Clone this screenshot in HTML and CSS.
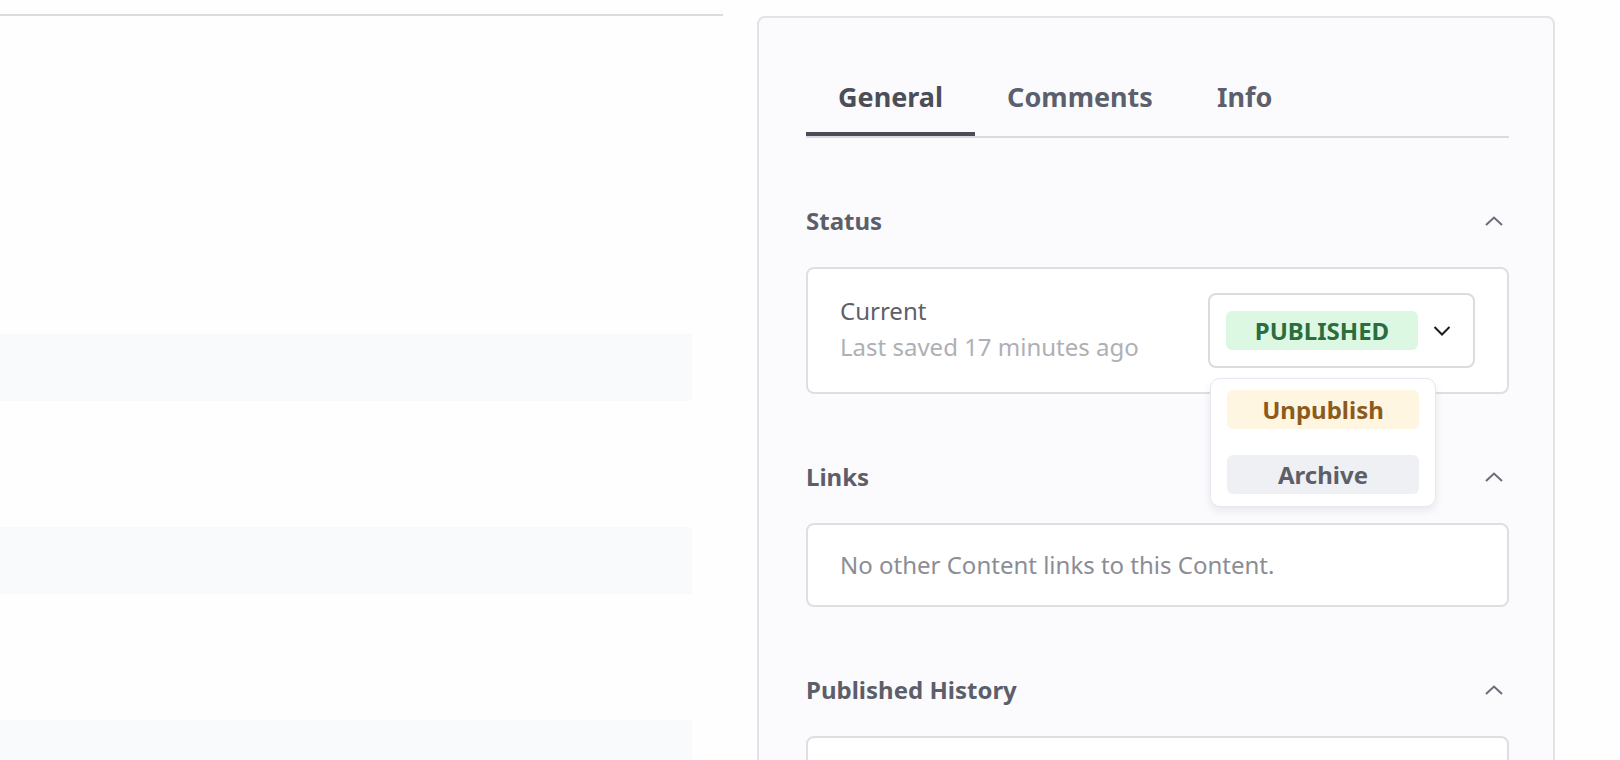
FILE: index.html
```html
<!DOCTYPE html>
<html lang="en">
<head>
    <meta charset="UTF-8">
    <meta name="viewport" content="width=device-width, initial-scale=1.0">
    <title>Content editor</title>
    <link rel="stylesheet" href="styles.css">
</head>
<body>
    <div class="page">
        <div class="main">
            <div class="main-rule"></div>
            <div class="rows">
                <div class="row"></div>
                <div class="row"></div>
                <div class="row"></div>
            </div>
        </div>

        <aside class="sidebar">
            <div class="tabs">
                <button class="tab active">General</button>
                <button class="tab">Comments</button>
                <button class="tab">Info</button>
            </div>

            <div class="section">
                <div class="section-head">
                    <h3>Status</h3>
                    <svg class="chevron-up" width="18" height="10" viewBox="0 0 18 10"><path d="M1 9 L9 1.5 L17 9" /></svg>
                </div>
                <div class="box status-box">
                    <div class="status-text">
                        <p class="label">Current</p>
                        <p class="subtext">Last saved 17 minutes ago</p>
                    </div>
                    <div class="status-select">
                        <span class="badge published">PUBLISHED</span>
                        <svg class="chevron-down" width="18" height="10" viewBox="0 0 18 10"><path d="M1.5 1 L9 8.5 L16.5 1" /></svg>
                        <div class="menu">
                            <button class="menu-item unpublish">Unpublish</button>
                            <button class="menu-item archive">Archive</button>
                        </div>
                    </div>
                </div>
            </div>

            <div class="section">
                <div class="section-head">
                    <h3>Links</h3>
                    <svg class="chevron-up" width="18" height="10" viewBox="0 0 18 10"><path d="M1 9 L9 1.5 L17 9" /></svg>
                </div>
                <div class="box links-box">
                    <p class="muted">No other Content links to this Content.</p>
                </div>
            </div>

            <div class="section">
                <div class="section-head">
                    <h3>Published History</h3>
                    <svg class="chevron-up" width="18" height="10" viewBox="0 0 18 10"><path d="M1 9 L9 1.5 L17 9" /></svg>
                </div>
                <div class="box history-box"></div>
            </div>
        </aside>
    </div>
</body>
</html>
```

FILE: styles.css
```css
html, body {
    height: 760px;
    overflow: hidden;
}
body {
    font-family: "Noto Sans", "Open Sans", sans-serif;
    background-color: #fefefe;
    color: #5c5f69;
    margin: 0;
    padding: 0;
}
p {
    margin: 0;
}
button {
    font-family: inherit;
    border: none;
    background: none;
    padding: 0;
    cursor: pointer;
}
.page {
    display: flex;
    align-items: flex-start;
}

/* left content list */
.main {
    width: 723px;
    padding-top: 14px;
}
.main-rule {
    border-top: 2px solid #dcdcdc;
}
.rows {
    display: flex;
    flex-direction: column;
    gap: 126px;
    margin-top: 318px;
    width: 692px;
}
.row {
    height: 67px;
    background: #f9fafc;
}

/* right side panel */
.sidebar {
    width: 798px;
    min-height: 800px;
    box-sizing: border-box;
    margin-left: 34px;
    margin-top: 16px;
    padding: 48px 44px 0 47px;
    background: #fbfbfd;
    border: 2px solid #e3e3e6;
    border-radius: 8px;
}
.tabs {
    display: flex;
    border-bottom: 2px solid #dadadf;
}
.tab {
    padding: 13px 32px 17px;
    font-size: 27px;
    line-height: 36px;
    font-weight: 700;
    color: #5c606c;
    border-bottom: 4px solid transparent;
}
.tab.active {
    color: #4b4d57;
    border-bottom-color: #4b4c57;
}
.section {
    margin-top: 67px;
}
.section-head {
    display: flex;
    align-items: center;
    justify-content: space-between;
    padding-right: 6px;
    margin-bottom: 30px;
}
.section-head h3 {
    margin: 0;
    font-size: 24px;
    line-height: 32px;
    font-weight: 700;
    color: #5c5f6a;
}
.chevron-up path {
    fill: none;
    stroke: #6a6d75;
    stroke-width: 2;
}
.chevron-down path {
    fill: none;
    stroke: #1d1d1f;
    stroke-width: 2;
}
.box {
    background: #fff;
    border: 2px solid #dfdfe2;
    border-radius: 8px;
}
.status-box {
    display: flex;
    align-items: center;
    justify-content: space-between;
    padding: 24px 32px;
}
.status-text {
    margin-top: -3px;
}
.label {
    font-size: 24px;
    line-height: 36px;
    color: #5d6069;
}
.subtext {
    font-size: 24px;
    line-height: 36px;
    color: #aeb0b6;
}
.status-select {
    position: relative;
    display: flex;
    align-items: center;
    gap: 15px;
    padding: 16px 22px 16px 16px;
    border: 2px solid #dcdcdf;
    border-radius: 8px;
}
.badge {
    display: block;
    width: 192px;
    height: 39px;
    line-height: 39px;
    text-align: center;
    font-size: 24px;
    font-weight: 700;
    border-radius: 6px;
}
.published {
    background: #dcf8e3;
    color: #2b6d3e;
}

/* status dropdown */
.menu {
    position: absolute;
    top: 83px;
    left: 0;
    display: flex;
    flex-direction: column;
    gap: 26px;
    padding: 11px 16px 12px;
    background: #fff;
    border: 1px solid #e6e6f4;
    border-radius: 10px;
    box-shadow: 0 4px 8px rgba(20, 20, 60, 0.08);
    z-index: 10;
}
.menu-item {
    width: 192px;
    height: 39px;
    font-size: 24px;
    font-weight: 700;
    border-radius: 6px;
}
.unpublish {
    background: #fff6e1;
    color: #8c5a1d;
}
.archive {
    background: #eff0f3;
    color: #5c5f6a;
}
.links-box {
    padding: 22px 32px;
}
.muted {
    font-size: 24px;
    line-height: 36px;
    color: #8b8d95;
}
.history-box {
    height: 120px;
}
```
